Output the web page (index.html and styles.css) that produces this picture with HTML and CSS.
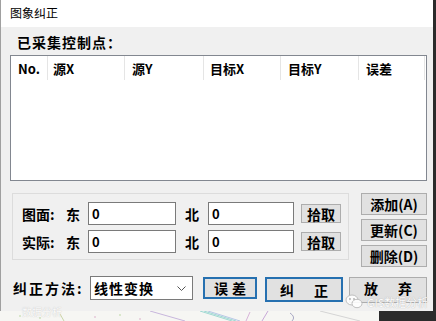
FILE: index.html
```html
<!DOCTYPE html>
<html lang="zh-CN">
<head>
    <meta charset="UTF-8">
    <title>图象纠正</title>
    <link rel="stylesheet" href="styles.css">
</head>
<body>
    <div class="screen">
        <div class="top">
            <div class="window">
                <div class="titlebar">图象纠正</div>
                <div class="client">
                    <div class="caption">已采集控制点：</div>
                    <div class="list">
                        <div class="list-head">
                            <div class="col c-no">No.</div>
                            <div class="col c-sx">源X</div>
                            <div class="col c-sy">源Y</div>
                            <div class="col c-tx">目标X</div>
                            <div class="col c-ty">目标Y</div>
                            <div class="col c-err">误差</div>
                        </div>
                    </div>

                    <div class="middle">
                        <div class="group">
                            <div class="coord-row">
                                <span class="lbl">图面:</span>
                                <span class="axis">东</span>
                                <div class="field">0</div>
                                <span class="axis north">北</span>
                                <div class="field field-n">0</div>
                                <button class="btn pick">拾取</button>
                            </div>
                            <div class="coord-row">
                                <span class="lbl">实际:</span>
                                <span class="axis">东</span>
                                <div class="field">0</div>
                                <span class="axis north">北</span>
                                <div class="field field-n">0</div>
                                <button class="btn pick">拾取</button>
                            </div>
                        </div>
                        <div class="side-buttons">
                            <button class="btn side">添加(A)</button>
                            <button class="btn side">更新(C)</button>
                            <button class="btn side">删除(D)</button>
                        </div>
                    </div>

                    <div class="bottom-row">
                        <span class="method-lbl">纠正方法:</span>
                        <div class="select">
                            <span>线性变换</span>
                            <svg class="chevron" width="9" height="6" viewBox="0 0 9 6"><path d="M0.5 0.5 L4.5 4.5 L8.5 0.5" fill="none" stroke="#555" stroke-width="1"/></svg>
                        </div>
                        <button class="btn focus b-err">误差</button>
                        <button class="btn focus b-fix">纠　正</button>
                        <button class="btn b-quit">放　弃</button>
                    </div>
                </div>
            </div>
            <div class="dark-edge"></div>
        </div>
        <div class="under">
            <div class="map">
                <svg width="379" height="10" viewBox="0 0 379 10">
                    <path d="M150 0 L185 10" stroke="#c7b6dc" stroke-width="1"/>
                    <path d="M200 0 L232 10" stroke="#9fd8d2" stroke-width="1"/>
                    <path d="M204 0 L236 10" stroke="#9fd8d2" stroke-width="1"/>
                    <path d="M208 0 L240 10" stroke="#b7c7e6" stroke-width="1"/>
                    <path d="M250 1 L246 10" stroke="#d7b2d8" stroke-width="1"/>
                    <path d="M268 0 L262 10" stroke="#c8a9d8" stroke-width="1"/>
                    <path d="M290 2 Q296 6 292 10" stroke="#a9a9c4" fill="none" stroke-width="1"/>
                    <path d="M320 0 L360 10" stroke="#d4d4d4" stroke-width="1"/>
                    <path d="M60 3 L64 10" stroke="#c9d6a8" stroke-width="1"/>
                    <circle cx="20" cy="5" r="0.8" fill="#b5d39a"/>
                    <circle cx="40" cy="7" r="0.8" fill="#b5d39a"/>
                    <circle cx="95" cy="6" r="0.8" fill="#d9a8c6"/>
                    <circle cx="120" cy="4" r="0.8" fill="#b5d39a"/>
                    <circle cx="140" cy="8" r="0.8" fill="#d9a8c6"/>
                </svg>
            </div>
            <div class="dark-corner"></div>
        </div>

        <div class="mark mark-right">
            <svg class="wechat" width="18" height="15" viewBox="0 0 18 15">
                <ellipse cx="7" cy="6" rx="6" ry="5" fill="#fff" stroke="#bbb" stroke-width="1"/>
                <ellipse cx="12" cy="9.5" rx="5" ry="4.2" fill="#fff" stroke="#bbb" stroke-width="1"/>
                <circle cx="5" cy="5" r="0.9" fill="#aaa"/>
                <circle cx="9" cy="5" r="0.9" fill="#aaa"/>
            </svg>
            <span>GIS数据分析</span>
        </div>
        <div class="mark mark-left">
            <span>数据分析</span>
        </div>
    </div>
</body>
</html>
```

FILE: styles.css
```css
body {
    margin: 0;
    padding: 0;
    font-family: "Noto Sans CJK SC", "Liberation Sans", sans-serif;
    color: #000;
    overflow: hidden;
}

.screen {
    position: relative;
    width: 436px;
    height: 321px;
    display: flex;
    flex-direction: column;
    overflow: hidden;
}

.top {
    display: flex;
    height: 311px;
}

.window {
    width: 433px;
    height: 311px;
    background: #f0f0f0;
    border-left: 1px solid #a0a0a0;
    box-sizing: border-box;
    display: flex;
    flex-direction: column;
}

.dark-edge {
    width: 3px;
    background: #2b2b2b;
}

.titlebar {
    height: 29px;
    background: #fff;
    font-size: 12px;
    line-height: 29px;
    padding-left: 9px;
    margin-top: -2px;
    color: #000;
}

.client {
    padding: 0 5px 0 9px;
    display: flex;
    flex-direction: column;
}

.caption {
    font-size: 14px;
    font-weight: 700;
    letter-spacing: 1px;
    height: 28px;
    line-height: 30px;
    padding-left: 7px;
}

/* control point list */
.list {
    width: 417px;
    height: 126px;
    background: #fff;
    border: 1px solid #828790;
    box-sizing: border-box;
}

.list-head {
    display: flex;
    height: 24px;
}

.col {
    font-size: 13px;
    font-weight: 700;
    line-height: 26px;
    padding-left: 7px;
    border-right: 1px solid #e5e5e5;
    box-sizing: border-box;
}

.c-no { width: 37px; }
.c-sx { width: 77px; padding-left: 5px; }
.c-sy { width: 79px; }
.c-tx { width: 77px; padding-left: 6px; }
.c-ty { width: 78px; }
.c-err { width: 66px; }

/* coordinates and side buttons */
.middle {
    display: flex;
    margin-top: 12px;
}

.group {
    width: 337px;
    height: 67px;
    margin-left: 2px;
    border: 1px solid #dcdcdc;
    box-sizing: border-box;
    padding: 8px 0 0 9px;
    display: flex;
    flex-direction: column;
    gap: 5px;
}

.coord-row {
    display: flex;
    align-items: center;
    height: 23px;
}

.lbl {
    width: 44px;
    font-size: 14px;
    font-weight: 700;
}

.axis {
    width: 22px;
    font-size: 14px;
    font-weight: 700;
}

.axis.north {
    margin-left: 9px;
    width: 23px;
}

.field {
    width: 88px;
    height: 23px;
    background: #fff;
    border: 1px solid #7a7a7a;
    box-sizing: border-box;
    font-size: 13px;
    font-weight: 700;
    line-height: 21px;
    padding-left: 3px;
}

.field-n {
    width: 86px;
}

.btn {
    font-family: "Noto Sans CJK SC", "Liberation Sans", sans-serif;
    font-weight: 700;
    font-size: 14px;
    background: #e1e1e1;
    border: 1px solid #adadad;
    padding: 0;
    color: #000;
    box-sizing: border-box;
    white-space: nowrap;
}

.pick {
    width: 40px;
    height: 19px;
    margin-left: 7px;
    line-height: 16px;
}

.side-buttons {
    display: flex;
    flex-direction: column;
    gap: 4px;
    margin-left: 12px;
}

.side {
    width: 66px;
    height: 22px;
    line-height: 18px;
}

/* method row */
.bottom-row {
    display: flex;
    align-items: flex-start;
    margin-top: 9px;
}

.method-lbl {
    width: 77px;
    margin-left: 3px;
    font-size: 14px;
    font-weight: 700;
    letter-spacing: 2px;
    line-height: 24px;
}

.select {
    width: 103px;
    height: 24px;
    background: #fff;
    border: 1px solid #7a7a7a;
    box-sizing: border-box;
    display: flex;
    align-items: center;
    justify-content: space-between;
    padding: 0 6px 0 3px;
    font-size: 14px;
    font-weight: 700;
    letter-spacing: 1px;
}

.chevron {
    margin-top: 1px;
}

.focus {
    border: 2px solid #2670b0;
}

.b-err {
    width: 54px;
    height: 22px;
    margin-left: 10px;
    margin-top: 1px;
    line-height: 17px;
    letter-spacing: 4px;
    padding-left: 4px;
}

.b-fix {
    width: 78px;
    height: 25px;
    margin-left: 8px;
    margin-top: 1px;
    letter-spacing: 3px;
    padding-left: 3px;
    line-height: 20px;
}

.b-quit {
    width: 78px;
    height: 26px;
    margin-left: 6px;
    margin-top: 1px;
    letter-spacing: 3px;
    padding-left: 3px;
    line-height: 18px;
    padding-bottom: 4px;
}

/* strip under the dialog */
.under {
    display: flex;
    height: 10px;
}

.map {
    width: 379px;
    background: #f6f6f3;
}

.map svg {
    display: block;
}

.dark-corner {
    flex: 1;
    background: #2b2b2b;
}

/* watermarks */
.mark {
    position: absolute;
    display: flex;
    align-items: center;
    font-size: 11px;
    line-height: 14px;
    color: #fff;
    text-shadow: 0 0 1px #999;
    opacity: 0.9;
}

.mark-right {
    left: 345px;
    top: 294px;
    gap: 4px;
}

.mark-left {
    left: 22px;
    top: 305px;
    font-size: 10px;
    opacity: 0.6;
}
```
